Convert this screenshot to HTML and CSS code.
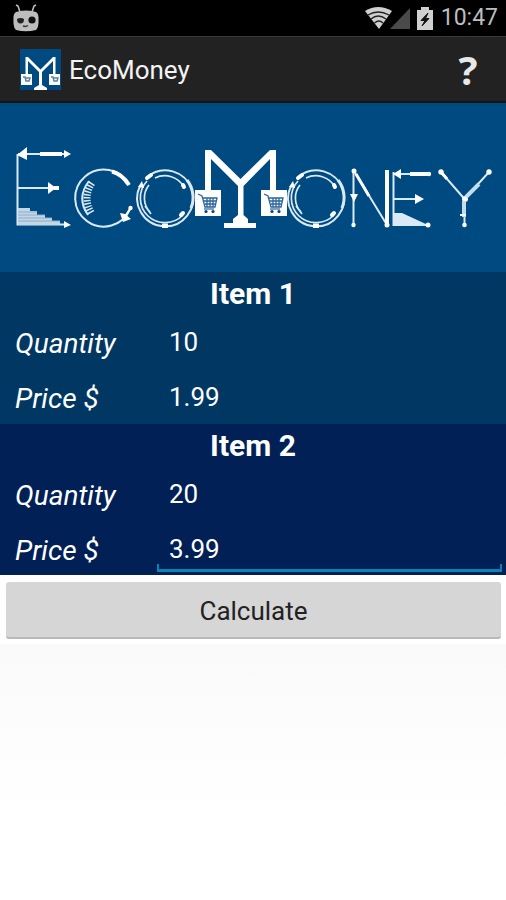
FILE: index.html
```html
<!DOCTYPE html>
<html lang="en">
<head>
<meta charset="utf-8">
<meta name="viewport" content="width=device-width, initial-scale=1">
<title>EcoMoney</title>
<link rel="stylesheet" href="styles.css">
</head>
<body>
<div class="status">
  <svg class="droid" width="28" height="28" viewBox="0 0 28 28" aria-hidden="true">
    <path d="M4 1l2 1 2 6M24 1l-2 1-2 6" fill="none" stroke="#bdbdbd" stroke-width="1.600"/>
    <path d="M6 7.500Q14 5.500 22 7.500Q27 8 26.500 15Q27 23 24 26Q14 28.500 4 26Q1 23 1.500 15Q1 8 6 7.500Z" fill="#bdbdbd"/>
    <path d="M5 15Q9 13 12 15Q12 19.500 8.500 19.500T5 15Z" fill="#222"/>
    <circle cx="20" cy="16" r="3.600" fill="#111"/>
    <path d="M11 22q3 1 5-.5" fill="none" stroke="#333" stroke-width="1.500"/>
  </svg>
  <div class="status-right">
    <svg width="46" height="24" viewBox="0 0 46 24" aria-hidden="true">
      <path d="M0 5Q13-3 27 5L14 23Z" fill="#d0d0d0"/>
      <path d="M3 9Q13 3 24 9M6 13Q13 7 21 13M9.500 17Q14 13 18 17" fill="none" stroke="#222" stroke-width="1.400"/>
      <path d="M25 23L45 2V23Z" fill="#4a4a4a"/>
    </svg>
    <svg class="battery" width="16" height="24" viewBox="0 0 16 24" aria-hidden="true">
      <path d="M4 1H12V4H16V24H0V4H4Z" fill="#d0d0d0"/>
      <path d="M11 7L4 14.500H8L5 20L12 12.500H8.500Z" fill="#111" stroke="#111"/>
    </svg>
    <span class="clock">10:47</span>
  </div>
</div>
<header class="bar">
  <svg class="app-icon" width="41" height="41" viewBox="0 0 41 41" aria-hidden="true">
    <path fill="#004a82" d="M0 0H41V41H0Z"/>
    <path d="M5.500 8H8L20.500 20.500L33 8H35.500V26H33V12L22 23V36L27 39V41H14V39L19 36V23L8 12V26H5.500Z" fill="#fff"/>
    <path d="M1 25H12V36H1ZM29 25H40V36H29Z" fill="#fff"/>
    <path d="M3 28H5L6 32H9L10 29H5M31 28H33L34 32H37L38 29H33" fill="none" stroke="#5684aa" stroke-width="1.500"/>
  </svg>
  <h1 class="title">EcoMoney</h1>
  <button class="help" type="button" aria-label="Help">?</button>
</header>
<main>
  <div class="banner">
    <svg class="logo" viewBox="0 103 506 169" role="img" aria-label="EcoMoney">
      <defs>
        <g id="ring" fill="none" stroke="#d9e9f5" stroke-width="1.700">
          <path d="M-25-12A28 28 0 1 0-18-21" stroke-width="2"/>
          <path d="M-18-17A25 25 0 0 0-17 18A25 25 0 0 0 18 17M-10-20A22 22 0 0 1 19-11M-16-13A20.500 20.500 0 0 0-15 14M-20 8L-14 16"/>
          <path d="M22-18A28 28 0 0 1 26 10" stroke-width="3"/>
          <path d="M-18-20L-14-23M18-13L19-11M16 17L18 15" stroke="#fff" stroke-width="4" stroke-linecap="round"/>
          <path d="M-23-17L-27-11L-21-10ZM-3 25.500H3V30H-3Z" fill="#fff" stroke="none"/>
        </g>
        <g id="basket">
          <path d="M0 0H26V26H0Z" fill="#fff"/>
          <path d="M3 4L7 6L10 17H20L22 8H8M9 11H21M10 14H20M12 8V17M15 8V17M18 8V17" fill="none" stroke="#2b659a" stroke-width="1.300"/>
          <path d="M9 19H19" stroke="#2b659a" stroke-width="1.200"/>
          <circle cx="11" cy="21.500" r="1.600" fill="#00477f"/><circle cx="18" cy="21.500" r="1.600" fill="#00477f"/>
        </g>
      </defs>
      <g fill="none" stroke="#d9e9f5" stroke-width="2">
        <path d="M17.500 154V224.500H66M18 154H66M18 188H50"/>
        <path d="M129 185A28.500 28.500 0 1 0 130 209"/>
        <path d="M89 181Q76 198 88 215" stroke-width="2"/>
        <path d="M92 183Q82 198 92 214" stroke-dasharray="1.500 1.500" stroke-width="7"/>
        <path d="M353.500 171V226M354 171L387 225M393.500 172V225H428M394 174H430M394 199H418M441 172L464.500 199L489 172M464.500 199V226"/>
      </g>
      <path d="M18 208H30V211H37V215H45V218H52V221H60V225H18Z" fill="#c3d6e6"/>
      <path d="M18 212H37M18 215H45M18 218H52M18 221H60" stroke="#8aadcb"/>
      <path d="M394 213H402L428 225H394Z" fill="#d9e9f5"/>
      <g fill="#fff">
        <path d="M17 155L27 147V160ZM64 150L71 154L64 158ZM48 182L56 188L48 194ZM54 186H59V190H54ZM64 221L71 225L64 228ZM120 213L125 214L131 219L123 222ZM393 174L401 169V179ZM415 194L424 199L415 204ZM350 194H358L354 202Z"/>
        <circle cx="130.500" cy="208" r="2.200"/><circle cx="354" cy="171" r="2.500"/><circle cx="353.500" cy="225" r="2.200"/>
        <circle cx="387" cy="225" r="2.500"/><circle cx="428" cy="225" r="2.500"/><circle cx="429" cy="174" r="2.200"/>
        <circle cx="441" cy="172" r="2.700"/><circle cx="489" cy="172" r="2.700"/><circle cx="464.500" cy="225" r="2.300"/><circle cx="465" cy="199" r="3"/>
      </g>
      <g fill="none" stroke="#fff">
        <path d="M40 154H62M112 171.500Q122 174 129 185M387 170V226M410 174H429" stroke-width="4"/>
        <path d="M441 172L447 179M356 174L369 196" stroke-width="3"/>
        <path d="M466 197L479 184M464 201V217" stroke="#c3dcee" stroke-width="4"/>
        <path d="M130 209L124 218M460 215H466" stroke-width="2"/>
      </g>
      <path d="M205 150H211L240.500 179L270 150H276V191H270V159L243.500 186V215L248 219V223H256V228H224V223H233V219L238 215V186L211 159V191H205Z" fill="#fff"/>
      <use href="#ring" x="165" y="198"/>
      <use href="#ring" x="316" y="198"/>
      <use href="#basket" x="195" y="190"/>
      <use href="#basket" x="261" y="190"/>
    </svg>
  </div>
  <form class="form">
    <section class="item item-one">
      <h2 class="heading">Item 1</h2>
      <div class="row"><label for="q1">Quantity</label><input id="q1" type="text" inputmode="decimal" value="10"></div>
      <div class="row"><label for="p1">Price $</label><input id="p1" type="text" inputmode="decimal" value="1.99"></div>
    </section>
    <section class="item item-two">
      <h2 class="heading">Item 2</h2>
      <div class="row"><label for="q2">Quantity</label><input id="q2" type="text" inputmode="decimal" value="20"></div>
      <div class="row"><label for="p2">Price $</label><input class="active" id="p2" type="text" inputmode="decimal" value="3.99"></div>
    </section>
    <div class="actions"><button class="calculate" type="button">Calculate</button></div>
  </form>
</main>
</body>
</html>
```
FILE: styles.css
```css
* { box-sizing: border-box; }
body {
  margin: 0;
  min-height: 100vh;
  display: flex;
  flex-direction: column;
  font-family: Roboto, "Liberation Sans", sans-serif;
  font-size: 26px;
  background: #fff;
}
svg { display: block; flex: none; }
.status {
  display: flex;
  justify-content: space-between;
  align-items: center;
  height: 36px;
  padding: 0 8px 0 12px;
  background: #000;
  color: #bdbdbd;
}
.status-right { display: flex; align-items: center; }
.battery { margin: 0 8px 0 6px; }
.clock { font-size: 23px; line-height: 38px; }
.bar {
  display: flex;
  align-items: center;
  height: 67px;
  padding: 0 20px;
  background: #222;
  border-top: 1px solid #3a3a3a;
  border-bottom: 2px solid #141414;
  color: #f3f3f3;
}
.title { flex: 1; margin: 0 0 0 8px; font-size: 26px; line-height: 32px; padding-top: 2px; font-weight: 400; }
.help {
  width: 36px;
  padding: 0;
  border: 0;
  background: none;
  color: #e8e8e8;
  font: 700 40px "Open Sans", sans-serif;
}
main { flex: 1; background: linear-gradient(#f8f8f8 60%, #fff 90%); }
.banner { background: #004a82; }
.logo { width: 100%; height: auto; }
.item { color: #fff; padding-bottom: 1px; }
.item-one { background: #003763; padding-bottom: 2px; }
.item-two { background: #002056; }
.heading { margin: 0; font-size: 30px; line-height: 44px; height: 40px; text-align: center; }
.row { display: flex; height: 55px; padding: 0 4px 0 15px; }
.row label {
  width: 142px;
  font-size: 28px;
  font-style: italic;
  font-weight: 400;
  line-height: 64px;
}
.row input {
  flex: 1;
  min-width: 0;
  height: 53px;
  padding: 6px 12px 0;
  border: 0;
  outline: 0;
  background: none;
  color: #fff;
  font: 400 26px Roboto, sans-serif;
}
.row .active {
  background:
    linear-gradient(#0b82b5, #0b82b5) bottom / 100% 3px no-repeat,
    linear-gradient(#0b82b5, #0b82b5) left bottom / 2px 8px no-repeat,
    linear-gradient(#0b82b5, #0b82b5) right bottom / 2px 8px no-repeat;
}
.actions { padding: 7px 5px 5px 6px; background: #fff; }
.calculate {
  display: block;
  width: 100%;
  height: 57px;
  padding: 2px 0 0;
  border: 0;
  border-bottom: 2px solid #b8b8b8;
  border-radius: 3px;
  background: #d6d6d6;
  color: #222;
  font: 400 26px Roboto, sans-serif;
}
```
